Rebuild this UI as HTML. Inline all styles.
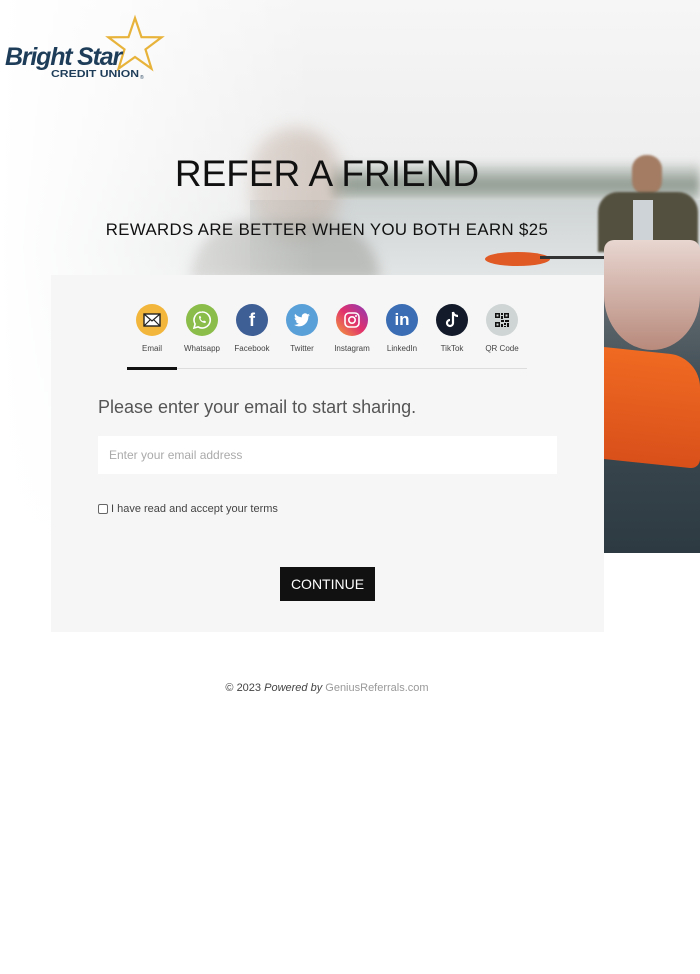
<!DOCTYPE html>
<html><head><meta charset="utf-8"><style>
*{margin:0;padding:0;box-sizing:border-box}
body{width:700px;height:974px;background:#fff;font-family:"Liberation Sans",sans-serif;position:relative;overflow:hidden}
.hero{position:absolute;left:0;top:0;width:700px;height:553px;background:linear-gradient(180deg,#f6f6f6 0%,#eeeeee 30%,#e6e8e8 45%,#f2f3f3 70%,#fff 100%);overflow:hidden}
.abs{position:absolute}
.ic{position:absolute;top:304px;width:32px;height:32px;border-radius:50%;display:flex;align-items:center;justify-content:center}
.lb{position:absolute;top:344px;width:60px;text-align:center;font-size:8px;color:#444}
</style></head><body>
<div class="hero">
  <div class="abs" style="left:330px;top:160px;width:370px;height:40px;background:linear-gradient(180deg,rgba(120,135,125,0),#8f9a90 60%,#c0c6c2);filter:blur(4px)"></div>
  <div class="abs" style="left:250px;top:200px;width:450px;height:75px;background:linear-gradient(180deg,#ced3d4,#e2e5e5)"></div>
  <div class="abs" style="left:250px;top:128px;width:90px;height:110px;border-radius:45px;background:#c6b5aa;filter:blur(8px);opacity:.6"></div>
  <div class="abs" style="left:190px;top:220px;width:190px;height:60px;border-radius:60px 60px 0 0;background:#9a9b95;filter:blur(6px);opacity:.5"></div>
  <div class="abs" style="left:0;top:0;width:700px;height:553px;background:linear-gradient(90deg,#fff 0%,rgba(255,255,255,.7) 15%,rgba(255,255,255,0) 45%)"></div>
  <div class="abs" style="left:632px;top:155px;width:30px;height:40px;border-radius:14px;background:#a37c63;filter:blur(1px)"></div>
  <div class="abs" style="left:598px;top:192px;width:100px;height:60px;border-radius:20px 20px 0 0;background:#54503f;filter:blur(1px)"></div>
  <div class="abs" style="left:633px;top:200px;width:20px;height:45px;background:#cdd3d6"></div>
  <div class="abs" style="left:485px;top:252px;width:65px;height:14px;border-radius:50%;background:#e05a25"></div>
  <div class="abs" style="left:540px;top:256px;width:160px;height:3px;background:#333"></div>
  <div class="abs" style="left:604px;top:275px;width:96px;height:278px;background:linear-gradient(180deg,#6b7378,#3f4c54 40%,#2d3a42)"></div>
  <div class="abs" style="left:604px;top:240px;width:96px;height:110px;border-radius:10px 10px 50% 50%;background:linear-gradient(180deg,#e8d6d0,#b88a7c)"></div>
  <div class="abs" style="left:604px;top:352px;width:96px;height:112px;border-radius:0 30px 10px 0;background:linear-gradient(180deg,#f06a22,#d9501a);transform:skewY(6deg)"></div>
</div>

<svg class="abs" style="left:0;top:8px" width="170" height="80" viewBox="0 0 170 80">
  <path d="M135 10 L141.5 29.1 L161.6 29.3 L145.5 41.4 L151.5 60.7 L135 49 L118.5 60.7 L124.5 41.4 L108.4 29.3 L128.5 29.1 Z" fill="none" stroke="#e8b33a" stroke-width="2.2" stroke-linejoin="miter"/>
  <text x="5" y="57" font-family="Liberation Sans" font-weight="bold" font-style="italic" font-size="25" fill="#1e3d59" letter-spacing="-1.2">Bright Star</text>
  <text x="51" y="69" font-family="Liberation Sans" font-weight="bold" font-size="10.5" fill="#1e3d59" textLength="88" lengthAdjust="spacingAndGlyphs">CREDIT UNION</text>
  <text x="140" y="71" font-family="Liberation Sans" font-size="5" fill="#1e3d59">®</text>
</svg>

<div class="abs" style="left:0;top:153px;width:654px;text-align:center;font-size:37px;color:#111">REFER A FRIEND</div>
<div class="abs" style="left:0;top:220px;width:654px;text-align:center;font-size:16.8px;color:#111;letter-spacing:.4px">REWARDS ARE BETTER WHEN YOU BOTH EARN $25</div>

<div class="abs" style="left:51px;top:275px;width:553px;height:357px;background:#f6f6f6"></div>

<div class="ic" style="left:136px;background:#f2b63c"><svg width="18" height="14" viewBox="0 0 18 14"><rect x="1" y="1" width="16" height="12" fill="#fff" stroke="#222" stroke-width="1.4"/><path d="M1 1 L9 8 L17 1 M1 13 L7 7 M17 13 L11 7" fill="none" stroke="#222" stroke-width="1.2"/></svg></div>
<div class="ic" style="left:186px;background:#8bbd4a"><svg width="20" height="20" viewBox="0 0 20 20"><path d="M10 2a8 8 0 0 0-6.9 12L2 18l4.2-1.1A8 8 0 1 0 10 2z" fill="none" stroke="#fff" stroke-width="1.6"/><path d="M7 6.5c0 4 3 6.5 6.5 6.5l.5-1.5-2-1-1 .8c-1.2-.6-2-1.4-2.6-2.6l.8-1-1-2z" fill="#fff"/></svg></div>
<div class="ic" style="left:236px;background:#3e5e96;color:#fff;font-weight:bold;font-size:18px">f</div>
<div class="ic" style="left:286px;background:#5aa0d8"><svg width="16" height="14" viewBox="0 0 24 20"><path d="M24 2.4a10 10 0 0 1-2.8.8A5 5 0 0 0 23.3.4a10 10 0 0 1-3.1 1.2A4.9 4.9 0 0 0 11.8 6 14 14 0 0 1 1.7.9a4.9 4.9 0 0 0 1.5 6.6A4.9 4.9 0 0 1 1 6.9a4.9 4.9 0 0 0 3.9 4.8 5 5 0 0 1-2.2.1 4.9 4.9 0 0 0 4.6 3.4A9.9 9.9 0 0 1 0 17.3 14 14 0 0 0 7.5 19.5c9.1 0 14-7.5 14-14v-.6A10 10 0 0 0 24 2.4z" fill="#fff"/></svg></div>
<div class="ic" style="left:336px;background:linear-gradient(45deg,#f4a23a,#e1306c 50%,#8a3ab9)"><svg width="18" height="18" viewBox="0 0 18 18"><rect x="2" y="2" width="14" height="14" rx="4" fill="none" stroke="#fff" stroke-width="1.6"/><circle cx="9" cy="9" r="3.2" fill="none" stroke="#fff" stroke-width="1.6"/><circle cx="13" cy="5" r="1" fill="#fff"/></svg></div>
<div class="ic" style="left:386px;background:#3a6db3;color:#fff;font-weight:bold;font-size:17px">in</div>
<div class="ic" style="left:436px;background:#131b2b"><svg width="16" height="18" viewBox="0 0 16 18"><path d="M9 1v11a3 3 0 1 1-3-3" fill="none" stroke="#fff" stroke-width="2.2"/><path d="M9 1c.5 2.5 2.5 4 5 4" fill="none" stroke="#fff" stroke-width="2.2"/></svg></div>
<div class="ic" style="left:486px;background:#cfd4d4"><svg width="16" height="16" viewBox="0 0 16 16" fill="#111"><path d="M1 1h5v5H1zM10 1h5v5h-5zM1 10h5v5H1z"/><path d="M2.5 2.5h2v2h-2zM11.5 2.5h2v2h-2zM2.5 11.5h2v2h-2z" fill="#cfd4d4"/><path d="M7 1h2v2H7zM7 4h2v3H7zM7 8h3v2H7zM11 8h4v2h-4zM10 11h2v2h-2zM13 11h2v4h-2zM7 12h2v3H7zM10 14h2v1h-2z"/></svg></div>

<div class="lb" style="left:122px">Email</div>
<div class="lb" style="left:172px">Whatsapp</div>
<div class="lb" style="left:222px">Facebook</div>
<div class="lb" style="left:272px">Twitter</div>
<div class="lb" style="left:322px">Instagram</div>
<div class="lb" style="left:372px">LinkedIn</div>
<div class="lb" style="left:422px">TikTok</div>
<div class="lb" style="left:472px">QR Code</div>

<div class="abs" style="left:127px;top:368px;width:400px;height:1px;background:#ddd"></div>
<div class="abs" style="left:127px;top:367px;width:50px;height:3px;background:#111"></div>

<div class="abs" style="left:98px;top:397px;font-size:18px;color:#555">Please enter your email to start sharing.</div>
<div class="abs" style="left:98px;top:436px;width:459px;height:38px;background:#fff;padding-left:11px;line-height:38px;font-size:12px;color:#aaa">Enter your email address</div>
<div class="abs" style="left:98px;top:504px;width:10px;height:10px;border:1px solid #666;border-radius:2px;background:#fff"></div>
<div class="abs" style="left:111px;top:503px;font-size:11px;color:#444">I have read and accept your terms</div>
<div class="abs" style="left:280px;top:567px;width:95px;height:34px;background:#111;color:#fff;font-size:14px;line-height:34px;text-align:center">CONTINUE</div>

<div class="abs" style="left:0;top:682px;width:654px;text-align:center;font-size:11px;color:#444">© 2023 <i>Powered by</i> <span style="color:#999">GeniusReferrals.com</span></div>
</body></html>
